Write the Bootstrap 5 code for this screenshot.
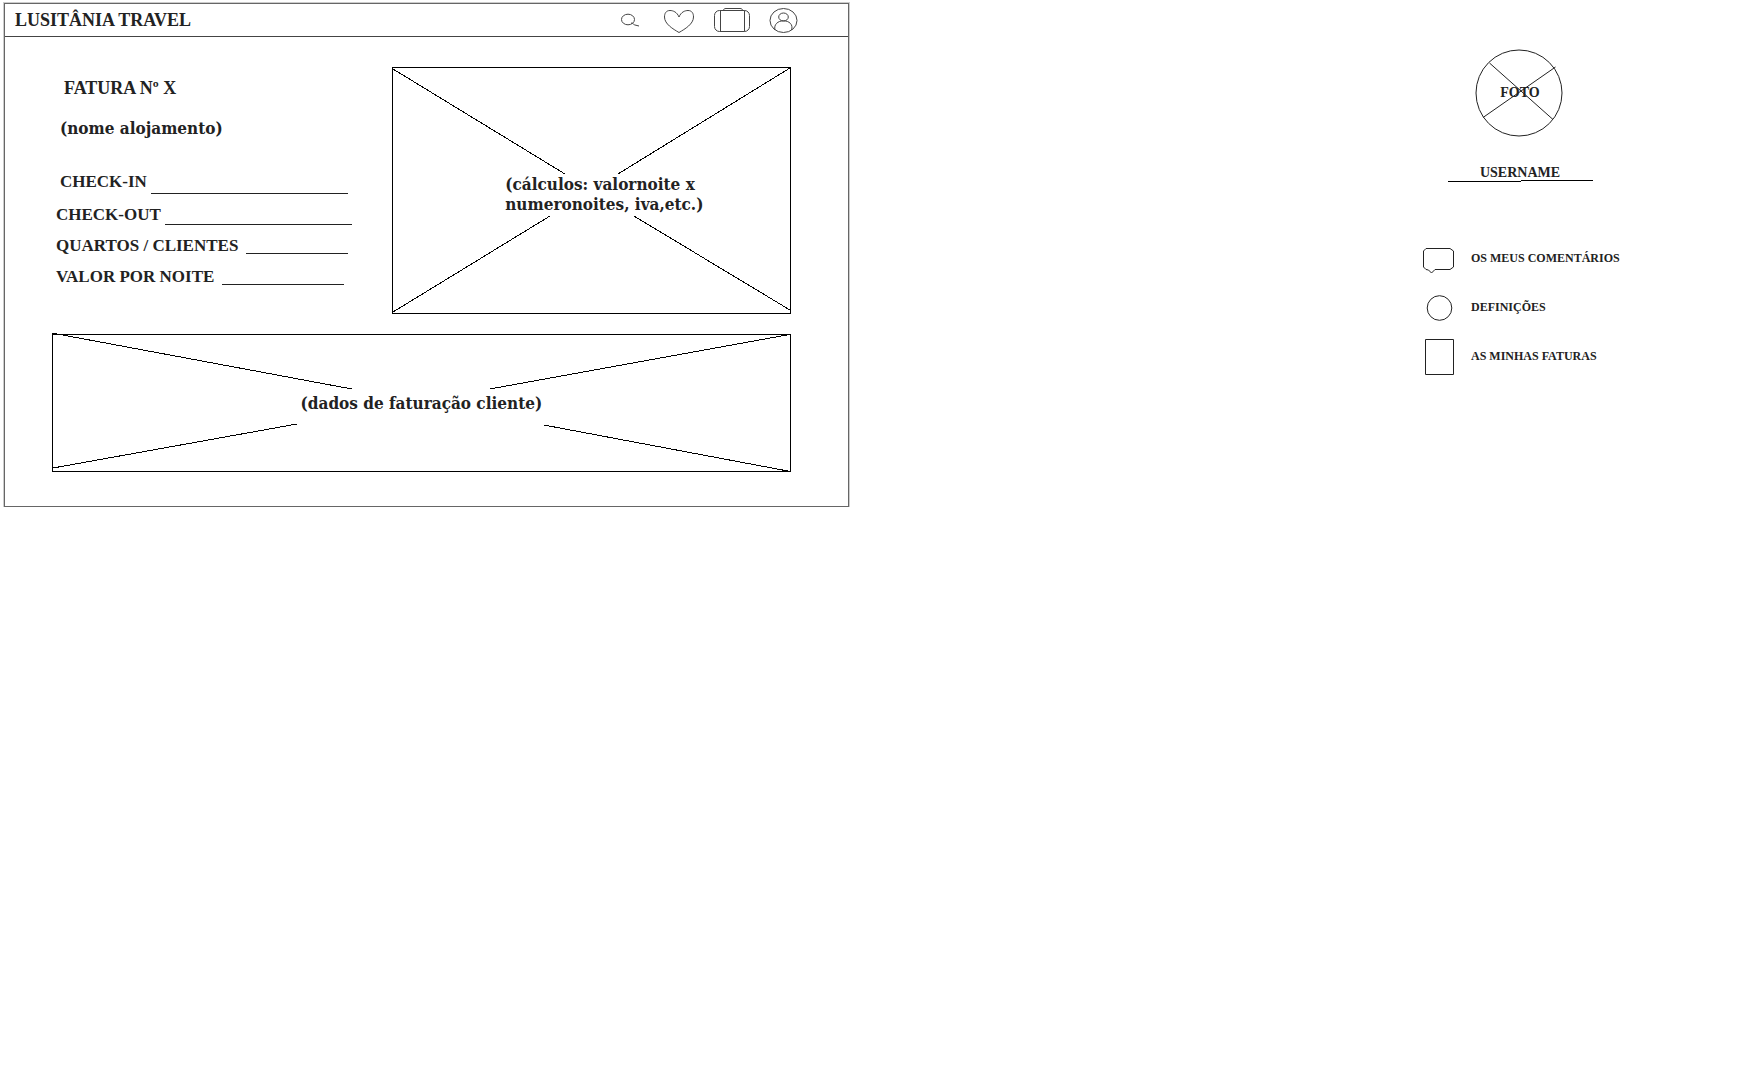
<!DOCTYPE html>
<html lang="pt">
<head>
<meta charset="utf-8">
<meta name="viewport" content="width=device-width, initial-scale=1">
<title>Lusitânia Travel</title>
<link href="https://cdn.jsdelivr.net/npm/bootstrap@5.3.0/dist/css/bootstrap.min.css" rel="stylesheet">
<style>
  body { font-family: "Liberation Serif", serif; font-weight: 700; font-size: 18px; line-height: 20px; color: #222; background: #fff; }
  svg { display: block; fill: none; stroke: #000; overflow: visible; }
  .soft { font-family: "DejaVu Serif Condensed", "DejaVu Serif", serif; font-size: 17px; }

  /* invoice window */
  .window { width: 48%; border: 1px solid #666; outline: 1px solid #ccc; margin: 3px 0 0 4px; }
  .topbar { height: 33px; padding: 0 50px 0 10px; border-bottom: 1px solid #444; }
  .icons { gap: 18px; }
  .icons svg { stroke: #444; }
  .content { padding: 30px 57px 34px 47px; }
  .upper { gap: 40px; margin-bottom: 20px; }
  .invoice { flex: 1 1 0; min-width: 0; padding-top: 11px; }
  .lodging { margin: 20px 0 34px; }
  .field-row { font-size: 17px; }
  .field-row + .field-row { margin-top: 11px; }
  .blank { flex: 1 1 0; min-width: 0; height: 18px; border: 0; border-bottom: 1px solid #222; background: transparent; padding: 0; }
  .blank-mid { height: 20px; }
  .blank-tall { height: 22px; }

  /* crossed placeholder boxes */
  .sketch { position: relative; border: 1px solid #000; }
  .sketch > svg { position: absolute; inset: 0; width: 100%; height: 100%; shape-rendering: crispEdges; }
  .sketch path { vector-effect: non-scaling-stroke; }
  .calc { flex: 0 0 54%; height: 247px; padding: 6px 0 0 26px; }
  .billing { height: 138px; }

  /* profile column */
  .profile { width: 194px; margin: 49px 143px 0 0; font-size: 14px; }
  .photo { position: relative; width: 88px; height: 88px; }
  .photo svg { position: absolute; inset: 0; stroke: #222; }
  .username { width: 145px; margin-top: 29px; line-height: 14px; }
  .side-menu { margin-top: 57px; gap: 12px; font-size: 12px; white-space: nowrap; }
  .side-menu a { gap: 16px; height: 37px; }
  .side-menu svg { stroke: #222; flex: none; }
</style>
</head>
<body>
<div class="d-flex justify-content-between align-items-start">
  <main class="window">
    <header class="topbar d-flex align-items-center justify-content-between">
      <a class="text-reset text-decoration-none" href="#">LUSITÂNIA TRAVEL</a>
      <nav class="icons d-flex align-items-center">
        <a href="#" class="me-1" aria-label="Pesquisar"><svg width="20" height="28" viewBox="0 0 20 28"><ellipse cx="7" cy="13.500" rx="6.500" ry="5.300"/><path d="M10 17c2 0 3 2 4 2l4 1"/></svg></a>
        <a href="#" aria-label="Favoritos"><svg width="32" height="28" viewBox="0 0 32 28"><path d="M16 11C14 6 10 4.500 7 4.500c-4 0-5.500 3-5.500 6.500C1.500 18 10 23 16 26.500 22 23 30.500 18 30.500 11c0-3.500-1.500-6.500-5.500-6.500-3 0-7 1.500-9 6.500z"/></svg></a>
        <a href="#" aria-label="Reservas"><svg width="38" height="28" viewBox="0 0 38 28"><rect x="1.500" y="4.500" width="35" height="21" rx="5"/><path d="M7.500 4.500v21M31.500 4.500v21M10.500 4.500c0-1.500 1-2 2.500-2h14c1.500 0 2.500.500 2.500 2"/></svg></a>
        <a href="#" aria-label="Perfil"><svg width="29" height="28" viewBox="0 0 29 28"><ellipse cx="14.500" cy="14.500" rx="13.500" ry="12"/><ellipse cx="14.500" cy="11" rx="4.800" ry="4"/><path d="M6 24C4.500 18.500 9 14.800 14.500 14.800S24.500 18.500 22.500 24"/></svg></a>
      </nav>
    </header>
    <div class="content">
      <div class="upper d-flex">
        <form class="invoice">
          <div class="ms-2 ps-1">FATURA Nº X</div>
          <div class="soft lodging ms-2">(nome alojamento)</div>
          <div class="field-row d-flex gap-1 ms-2 me-1"><label for="checkin">CHECK-IN</label><input class="blank blank-tall" type="text" id="checkin"></div>
          <div class="field-row d-flex gap-1 ms-1"><label for="checkout">CHECK-OUT</label><input class="blank blank-mid" type="text" id="checkout"></div>
          <div class="field-row d-flex gap-2 ms-1 me-1"><label for="rooms">QUARTOS / CLIENTES</label><input class="blank" type="text" id="rooms"></div>
          <div class="field-row d-flex gap-2 ms-1 me-2"><label for="rate">VALOR POR NOITE</label><input class="blank" type="text" id="rate"></div>
        </form>
        <section class="calc sketch d-flex align-items-center justify-content-center">
          <svg viewBox="0 0 397 245" preserveAspectRatio="none" aria-hidden="true"><path d="M0 1L172 106M397 0L225 106M0 244L157 148M241 148L397 242"/></svg>
          <div class="soft">(cálculos: valornoite x<br>numeronoites, iva,etc.)</div>
        </section>
      </div>
      <section class="billing sketch d-flex align-items-center justify-content-center">
        <svg viewBox="0 0 737 136" preserveAspectRatio="none" aria-hidden="true"><path d="M-1 -2L299 54M734 0L437 54M0 133L244 89M491 90L735 136"/></svg>
        <div class="soft">(dados de faturação cliente)</div>
      </section>
    </div>
  </main>

  <aside class="profile">
    <div class="photo d-flex align-items-center justify-content-center mx-auto">
      <span>FOTO</span>
      <svg width="88" height="88" viewBox="0 0 88 88" aria-hidden="true"><circle cx="43" cy="44" r="43"/><path d="M13.500 14L77 70.500M79.500 18L7 68.500"/></svg>
    </div>
    <div class="username text-center mx-auto">USERNAME
      <svg width="145" height="2" viewBox="0 0 145 2" aria-hidden="true"><path d="M0 1.500H73M73 .5H145"/></svg>
    </div>
    <nav class="side-menu d-flex flex-column">
      <a class="d-flex align-items-center text-reset text-decoration-none" href="#"><svg width="32" height="37" viewBox="0 0 32 37" aria-hidden="true"><path d="M3 9.500H27L30.500 12V28L27 30.500H12L8.500 34 5.500 31 3 30.500 .5 28V12z"/></svg>OS MEUS COMENTÁRIOS</a>
      <a class="d-flex align-items-center text-reset text-decoration-none" href="#"><svg width="32" height="37" viewBox="0 0 32 37" aria-hidden="true"><circle cx="16.500" cy="20" r="12.300"/></svg>DEFINIÇÕES</a>
      <a class="d-flex align-items-center text-reset text-decoration-none" href="#"><svg width="32" height="37" viewBox="0 0 32 37" aria-hidden="true"><path d="M2.500 2.500H30.500V37.500H2.500z"/></svg>AS MINHAS FATURAS</a>
    </nav>
  </aside>
</div>
<script src="https://cdn.jsdelivr.net/npm/bootstrap@5.3.0/dist/js/bootstrap.bundle.min.js"></script>
</body>
</html>
